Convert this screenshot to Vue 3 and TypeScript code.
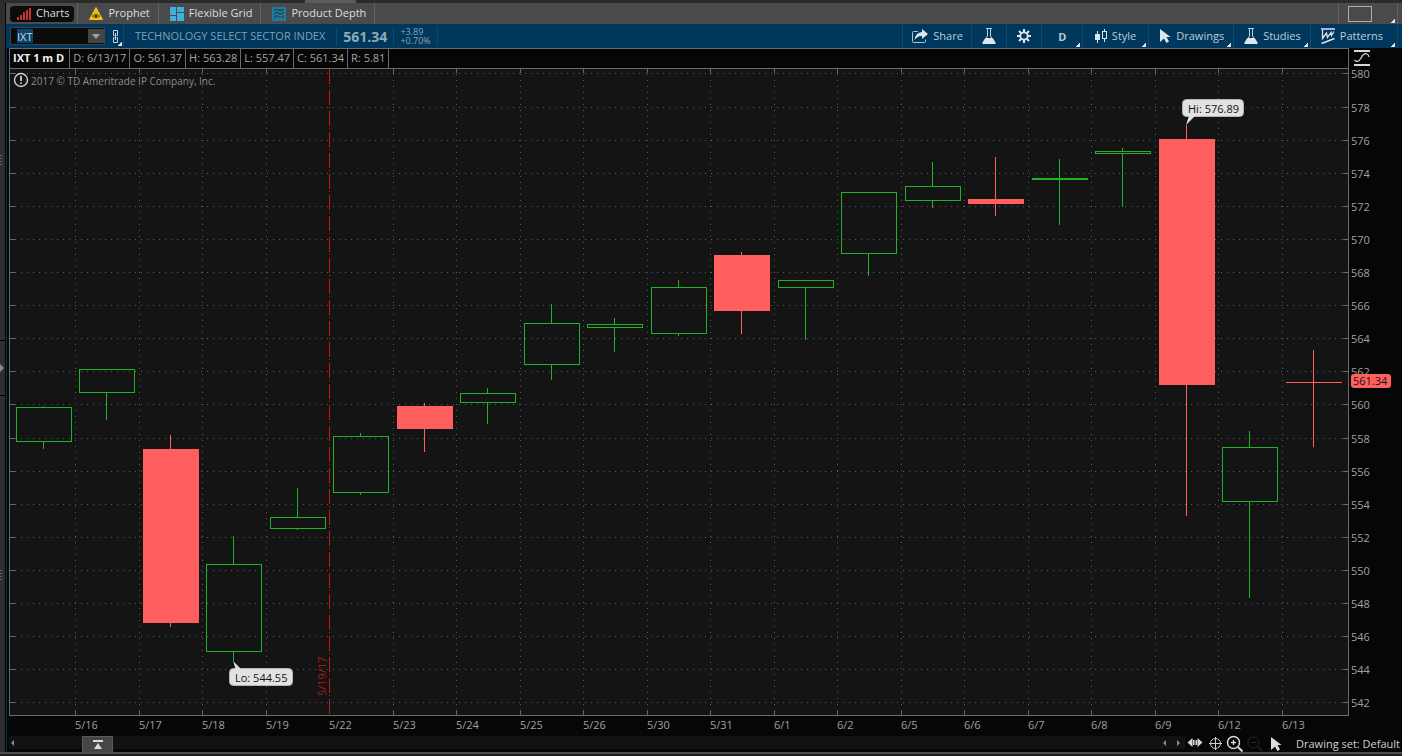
<script setup lang="ts">
import { computed, onBeforeUnmount, onMounted, ref } from 'vue'

interface Candle {
  date: string
  open: number
  high: number
  low: number
  close: number
}

const candles: Candle[] = [
  { date: '5/15', open: 557.79, high: 559.91, low: 557.37, close: 559.85 },
  { date: '5/16', open: 560.75, high: 562.14, low: 559.12, close: 562.14 },
  { date: '5/17', open: 557.31, high: 558.15, low: 546.61, close: 546.86 },
  { date: '5/18', open: 545.1, high: 552.05, low: 544.55, close: 550.36 },
  { date: '5/19', open: 552.53, high: 554.95, low: 552.47, close: 553.2 },
  { date: '5/22', open: 554.71, high: 558.27, low: 554.59, close: 558.09 },
  { date: '5/23', open: 559.91, high: 560.09, low: 557.19, close: 558.58 },
  { date: '5/24', open: 560.15, high: 560.99, low: 558.88, close: 560.69 },
  { date: '5/25', open: 562.44, high: 566.07, low: 561.54, close: 564.92 },
  { date: '5/26', open: 564.68, high: 565.22, low: 563.23, close: 564.86 },
  { date: '5/30', open: 564.32, high: 567.52, low: 564.2, close: 567.1 },
  { date: '5/31', open: 569.03, high: 569.21, low: 564.32, close: 565.71 },
  { date: '6/1', open: 567.1, high: 567.52, low: 563.95, close: 567.52 },
  { date: '6/2', open: 569.15, high: 572.84, low: 567.82, close: 572.84 },
  { date: '6/5', open: 572.35, high: 574.65, low: 571.93, close: 573.2 },
  { date: '6/6', open: 572.41, high: 574.95, low: 571.45, close: 572.17 },
  { date: '6/7', open: 573.62, high: 574.83, low: 570.9, close: 573.68 },
  { date: '6/8', open: 575.19, high: 575.5, low: 571.99, close: 575.31 },
  { date: '6/9', open: 576.04, high: 576.89, low: 553.32, close: 561.24 },
  { date: '6/12', open: 554.17, high: 558.4, low: 548.37, close: 557.43 },
  { date: '6/13', open: 561.37, high: 563.28, low: 557.47, close: 561.34 },
]

const tabs = [
  { id: 'charts', label: 'Charts' },
  { id: 'prophet', label: 'Prophet' },
  { id: 'grid', label: 'Flexible Grid' },
  { id: 'depth', label: 'Product Depth' },
]
const activeTab = ref('charts')
const symbol = ref('IXT')

const quote = ['D: 6/13/17', 'O: 561.37', 'H: 563.28', 'L: 557.47', 'C: 561.34', 'R: 5.81']

const AXIS_W = 53
const AXIS_H = 20
const TOP_PRICE = 580.299
const BOTTOM_PRICE = 541.205

const host = ref<HTMLElement | null>(null)
const width = ref(1393)
const height = ref(668)
let observer: ResizeObserver | null = null

function measure() {
  if (!host.value) return
  width.value = host.value.clientWidth
  height.value = host.value.clientHeight
}
onMounted(() => {
  measure()
  observer = new ResizeObserver(measure)
  observer.observe(host.value as HTMLElement)
})
onBeforeUnmount(() => observer?.disconnect())

const plotW = computed(() => width.value - AXIS_W)
const plotH = computed(() => height.value - AXIS_H)
const slot = computed(() => plotW.value / 21.102)

const y = (p: number) =>
  Math.floor(((TOP_PRICE - p) / (TOP_PRICE - BOTTOM_PRICE)) * (plotH.value - 1)) + 1
const gridX = (i: number) => Math.floor(3.25 + slot.value * i)

const levels = Array.from({ length: 20 }, (_, i) => 580 - i * 2)

const bars = computed(() =>
  candles.map((c, i) => {
    const up = c.close >= c.open
    const top = y(Math.max(c.open, c.close))
    const bottom = y(Math.min(c.open, c.close)) + 1
    return {
      key: c.date,
      up,
      x: Math.floor(34.25 + slot.value * i),
      w: Math.round(slot.value * 0.88),
      top,
      h: bottom - top,
      bottom,
      high: y(c.high),
      low: y(c.low) + 1,
    }
  }),
)
const dates = computed(() =>
  candles.slice(1).map((c, i) => ({ label: c.date, x: gridX(i + 1) })),
)
const hi = computed(() => bars.value[18])
const lo = computed(() => bars.value[3])
const last = computed(() => y(561.34))
const expiryX = computed(() => gridX(5))
</script>

<template>
  <div class="app">
    <div class="strip"></div>
    <div class="gutter">
      <i class="grip"></i>
      <button class="expander" aria-label="Expand sidebar">
        <svg width="4" height="8" viewBox="0 0 4 8"><path d="M0 0L4 4L0 8Z" fill="#8a8a8a" /></svg>
      </button>
      <i class="grip low"></i>
    </div>

    <main class="main">
      <nav class="tabs">
        <div v-for="t in tabs" :key="t.id" class="tab-cell">
          <button class="tab" :class="{ active: activeTab === t.id }" @click="activeTab = t.id">
            <svg v-if="t.id === 'charts'" width="14" height="12" viewBox="0 0 14 12">
              <path d="M0 9h2v3H0zM3 7h2v5H3zM6 4h2v8H6zM9 2h2v10H9zM12 0h2v12h-2z" fill="#c93030" />
            </svg>
            <svg v-else-if="t.id === 'prophet'" width="14" height="13" viewBox="0 0 14 13">
              <path d="M7 0.5L13.5 12.5H0.5Z" fill="#f2c00f" stroke="#f2c00f" stroke-linejoin="round" />
              <path d="M3.500 9Q7 5.600 10.500 9Q7 12.200 3.500 9Z" fill="none" stroke="#5a4a10" />
              <circle cx="7" cy="9" r="1.300" fill="#3a3010" />
            </svg>
            <svg v-else-if="t.id === 'grid'" width="14" height="14" viewBox="0 0 14 14">
              <path d="M0 0h6v8H0zM0 9h6v5H0zM7 0h7v5H7zM7 6h7v8H7z" fill="#3fb0de" />
            </svg>
            <svg v-else width="14" height="14" viewBox="0 0 14 14">
              <rect x="1" y="1" width="12" height="12" fill="#24505f" stroke="#1688b4" stroke-width="1.600" />
              <path d="M2 5Q4 2.500 6.500 4.500T12 4M2 8.500Q4 6 6.500 8T12 7M3 11h8" fill="none" stroke="#1f8fbc" />
            </svg>
            <span>{{ t.label }}</span>
          </button>
        </div>
        <div class="tab-right">
          <button class="layout-btn" aria-label="Grid layout"><span></span></button>
        </div>
      </nav>

      <header class="toolbar">
        <div class="symbol">
          <input v-model="symbol" aria-label="Symbol" spellcheck="false" />
          <button class="drop" aria-label="Symbol list">
            <svg width="8" height="5" viewBox="0 0 8 5"><path d="M0 0h8L4 5Z" fill="#a0a0a0" /></svg>
          </button>
        </div>
        <button class="link corner" aria-label="Link symbol">
          <svg width="7" height="13" viewBox="0 0 7 13" fill="none" stroke="#c4d4de">
            <path d="M2.500 5.500H1.500V0.500H5.500V5.500H4.500M2.500 7.500H1.500V12.500H5.500V7.500H4.500M3.500 3V10" />
          </svg>
        </button>
        <span class="name">TECHNOLOGY SELECT SECTOR INDEX</span>
        <strong class="last">561.34</strong>
        <span class="change"><span>+3.89</span><span>+0.70%</span></span>

        <div class="actions">
          <button class="act share">
            <svg width="16" height="14" viewBox="0 0 16 14">
              <path d="M6 2.500H1.500Q0.500 2.500 0.500 3.500V12.500Q0.500 13.500 1.500 13.500H12.500Q13.500 13.500 13.500 12.500V10.500" fill="none" stroke="#a9c4d2" />
              <path d="M10 0L16 5L10 10V7Q6 6.500 2.500 11Q3.500 3.500 10 3Z" fill="#dce6ec" />
            </svg>
            <span>Share</span>
          </button>
          <button class="act icon" aria-label="Analysis">
            <svg width="14" height="16" viewBox="0 0 14 16">
              <path d="M4 0.500H10M5.500 1V8L2 13M8.500 1V8L12 13" fill="none" stroke="#b6ccd8" />
              <path d="M3.500 10H10.500L13.500 14.500V16H0.500V14.500Z" fill="#dce6ec" />
            </svg>
          </button>
          <button class="act icon" aria-label="Settings">
            <svg width="14" height="14" viewBox="0 0 14 14" fill="none" stroke="#dce6ec">
              <circle cx="7" cy="7" r="3.700" stroke-width="1.800" />
              <path d="M7 0V3M7 11V14M0 7H3M11 7H14M2 2L4.200 4.200M9.800 9.800L12 12M2 12L4.200 9.800M9.800 4.200L12 2" stroke-width="2" />
            </svg>
          </button>
          <button class="act corner day"><b>D</b></button>
          <button class="act corner style">
            <svg width="14" height="14" viewBox="0 0 14 14">
              <path d="M4.500 2V14M11.500 0V13" stroke="#dce6ec" />
              <rect x="2" y="5" width="5" height="6" fill="#dce6ec" />
              <rect x="9.500" y="2.500" width="4" height="7" fill="#00375c" stroke="#dce6ec" />
            </svg>
            <span>Style</span>
          </button>
          <button class="act corner">
            <svg width="12" height="14" viewBox="0 0 12 14">
              <path d="M1 0L11.500 8H7.500L10 12.500L7.500 14L5 9.500L1 13Z" fill="#dce6ec" />
            </svg>
            <span>Drawings</span>
          </button>
          <button class="act corner">
            <svg width="14" height="16" viewBox="0 0 14 16">
              <path d="M4 0.500H10M5.500 1V8L2 13M8.500 1V8L12 13" fill="none" stroke="#b6ccd8" />
              <path d="M3.500 10H10.500L13.500 14.500V16H0.500V14.500Z" fill="#dce6ec" />
            </svg>
            <span>Studies</span>
          </button>
          <button class="act corner wide">
            <svg width="14" height="16" viewBox="0 0 14 16" fill="none" stroke="#dce6ec">
              <path d="M0 1H14M0.500 15.500L13.500 10.500" stroke-width="1.600" />
              <path d="M1.500 2V10.500L5.500 5L6.500 9.500L10 4.500L10.500 7.500L13 3.500" stroke-width="1.300" />
            </svg>
            <span>Patterns</span>
          </button>
        </div>
      </header>

      <section class="panel">
        <div class="quote">
          <b>IXT 1 m D</b>
          <span v-for="q in quote" :key="q">{{ q }}</span>
        </div>
        <button class="curve" aria-label="Scale settings">
          <svg width="16" height="16" viewBox="0 0 16 16" fill="none" stroke="#d8d8d8">
            <path d="M0 1H16M0 15H16" stroke-width="2" />
            <path d="M0.500 10Q4 13.500 7 8T13 4Q14.500 4.500 15 7" stroke-width="1.200" />
          </svg>
        </button>

        <div ref="host" class="chart">
          <svg :width="width" :height="height" :viewBox="`0 0 ${width} ${height}`" role="img" aria-label="IXT daily candlestick chart">
            <rect x="0" y="0" :width="plotW" :height="plotH" fill="#141414" />
            <g shape-rendering="crispEdges" fill="none">
              <g v-for="p in levels" :key="p">
                <path :d="`M6 ${y(p) + 0.5}H${plotW - 6}`" stroke="#5c5c5c" stroke-dasharray="1 5" />
                <path :d="`M0 ${y(p) + 0.5}h6M${plotW - 6} ${y(p) + 0.5}h6`" stroke="#6a6a6a" />
              </g>
              <g v-for="d in dates" :key="d.label">
                <path v-if="d.x !== expiryX" :d="`M${d.x + 0.5} 6V${plotH - 5}`" stroke="#5c5c5c" stroke-dasharray="1 5" />
                <path v-if="d.x !== expiryX" :d="`M${d.x + 0.5} 0v5M${d.x + 0.5} ${plotH - 5}v5`" stroke="#6a6a6a" />
              </g>
              <path :d="`M${expiryX + 0.5} 1V${plotH}`" stroke="#c41818" stroke-dasharray="15 2 1 3" />
              <path :d="`M0.5 0V${plotH - 0.5}H${plotW - 0.5}V0M0 0.5H${plotW}`" stroke="#6a6a6a" />
            </g>

            <g shape-rendering="crispEdges">
              <g v-for="b in bars" :key="b.key" :class="b.up ? 'up' : 'down'">
                <rect class="wick" :x="b.x" :y="b.high" width="1" :height="b.top - b.high" />
                <rect class="wick" :x="b.x" :y="b.bottom" width="1" :height="b.low - b.bottom" />
                <rect
                  v-if="b.up && b.h > 2"
                  class="hollow"
                  :x="b.x - 26.5"
                  :y="b.top + 0.5"
                  :width="b.w - 1"
                  :height="b.h - 1"
                />
                <rect v-else class="solid" :x="b.x - 27" :y="b.top" :width="b.w" :height="b.h" />
              </g>
            </g>

            <g class="axis">
              <text v-for="p in levels" :key="p" :x="plotW + 2" :y="y(p) + 5">{{ p }}</text>
              <text v-for="d in dates" :key="d.label" :x="d.x" :y="plotH + 13">{{ d.label }}</text>
            </g>

            <g :transform="`translate(${plotW + 2} ${last - 8})`">
              <rect width="40" height="14" rx="3" fill="#ff5f5f" />
              <text class="dark" x="2" y="11">561.34</text>
            </g>

            <text
              class="expiry"
              :transform="`translate(${expiryX - 3} ${plotH - 20}) rotate(-90)`"
            >5/19/17</text>

            <g :transform="`translate(${hi.x} ${hi.high})`">
              <rect x="-3.500" y="-25.500" width="61" height="17" rx="4" fill="#e2e2e2" stroke="#b4b4b4" />
              <path d="M0 0L3 -9H9Z" fill="#e2e2e2" />
              <text class="dark" x="2" y="-12">Hi: 576.89</text>
            </g>
            <g :transform="`translate(${lo.x} ${lo.low})`">
              <rect x="-3.500" y="7.500" width="63" height="17" rx="4" fill="#e2e2e2" stroke="#b4b4b4" />
              <path d="M0 0L3 9H9Z" fill="#e2e2e2" />
              <text class="dark" x="2" y="21">Lo: 544.55</text>
            </g>

            <g fill="none" stroke="#d0d0d0" stroke-width="1.400">
              <circle cx="12" cy="12" r="6.500" />
              <path d="M12 8V13M12 14.500V16" stroke-width="1.800" />
            </g>
            <text class="copy" x="22" y="17">2017 © TD Ameritrade IP Company, Inc.</text>
          </svg>
        </div>
      </section>

      <footer class="bottom">
        <div class="track">
          <button class="arrow" aria-label="Scroll left">
            <svg width="3" height="6" viewBox="0 0 3 6"><path d="M3 0V6L0 3Z" fill="#8a8a8a" /></svg>
          </button>
          <button class="pull" aria-label="Open panel">
            <svg width="10" height="9" viewBox="0 0 10 9"><path d="M0 0H10V2H0ZM5 3L9 9H1Z" fill="#dcdcdc" /></svg>
          </button>
          <button class="arrow prev" aria-label="Scroll back">
            <svg width="3" height="6" viewBox="0 0 3 6"><path d="M3 0V6L0 3Z" fill="#8a8a8a" /></svg>
          </button>
          <button class="arrow" aria-label="Scroll right">
            <svg width="3" height="6" viewBox="0 0 3 6"><path d="M0 0V6L3 3Z" fill="#8a8a8a" /></svg>
          </button>
        </div>
        <button class="tool" aria-label="Pan">
          <svg width="16" height="16" viewBox="0 0 16 16">
            <path d="M5.500 2V11L0.500 6.500ZM10.500 2V11L15.500 6.500ZM6 4h1v5H6zM7.500 4h1v5h-1zM9 4h1v5H9z" fill="#d8d8d8" />
          </svg>
        </button>
        <button class="tool" aria-label="Crosshair">
          <svg width="16" height="16" viewBox="0 0 16 16" fill="none" stroke="#d0d0d0">
            <circle cx="8.500" cy="7.500" r="5" /><path d="M2 7.500H15M8.500 1V14" />
          </svg>
        </button>
        <button class="tool" aria-label="Zoom in">
          <svg width="18" height="18" viewBox="0 0 18 18" fill="none" stroke="#d8d8d8">
            <circle cx="7.500" cy="7.500" r="6" stroke-width="1.500" />
            <path d="M12 12L16.500 16.500" stroke-width="2" /><path d="M5 7.500H10M7.500 5V10" stroke-width="1.300" />
          </svg>
        </button>
        <button class="tool" aria-label="Zoom out" disabled>
          <svg width="18" height="18" viewBox="0 0 18 18" fill="none" stroke="#262626">
            <circle cx="7.500" cy="7.500" r="5.500" /><path d="M12 12L16 16" stroke-width="1.500" /><path d="M5 7.500H10" />
          </svg>
        </button>
        <button class="tool cursor" aria-label="Pointer">
          <svg width="12" height="14" viewBox="0 0 12 14">
            <path d="M1 0L11.500 8H7.500L10 12.500L7.500 14L5 9.500L1 13Z" fill="#dcdcdc" />
          </svg>
        </button>
        <button class="set">Drawing set: Default</button>
      </footer>
    </main>
    <div class="base"></div>
  </div>
</template>

<style>
html,
body {
  margin: 0;
  background: #0a0a0a;
}
</style>

<style scoped>
.app {
  display: grid;
  grid-template-columns: 8px minmax(0, 1fr);
  grid-template-rows: 3px minmax(0, 1fr) 4px;
  height: 100vh;
  min-height: 400px;
  overflow: hidden;
  background: #060606;
  color: #c8c8c8;
  font-family: 'Open Sans', 'Noto Sans', sans-serif;
  font-size: 11px;
}
button,
input {
  margin: 0;
  padding: 0;
  border: 0;
  background: none;
  color: inherit;
  font: inherit;
}
svg {
  display: block;
  flex: none;
}
.strip {
  grid-column: 1 / -1;
  background: linear-gradient(90deg, #2b2b2b 305px, #5c5c5c 305px, #5c5c5c 356px, #2b2b2b 356px);
}
.gutter {
  display: flex;
  flex-direction: column;
  align-items: flex-start;
  justify-content: space-between;
  box-sizing: border-box;
  width: 8px;
  background: linear-gradient(90deg, #2e2e2e 5px, #050505 5px, #050505 6px, #0b3048 6px, #0b3048 7px, #050505 7px);
}
.grip {
  width: 2px;
  height: 10px;
  margin-top: 152px;
  background: repeating-linear-gradient(#666 0 1px, transparent 1px 3px);
}
.grip.low {
  margin: 0 0 172px;
}
.expander {
  display: flex;
  align-items: center;
  width: 5px;
  height: 56px;
  border-top: 1px solid #000;
  border-bottom: 1px solid #000;
}
.main {
  display: flex;
  flex-direction: column;
  min-width: 0;
  min-height: 0;
}
.tabs {
  display: flex;
  height: 21px;
  margin-left: -2px;
  background: #4a4a4a;
  color: #dedede;
}
.tab-cell {
  display: flex;
  align-items: center;
  padding: 0 3px 0 4px;
  border-right: 1px solid #626262;
}
.tab {
  display: flex;
  align-items: center;
  gap: 5px;
  height: 16px;
  padding: 0 5px 0 7px;
  border-radius: 4px;
}
.tab span,
.act span,
.name {
  padding-bottom: 2px;
}
.tab.active {
  background: #0c0c0c;
}
.tab-right {
  display: flex;
  align-items: center;
  margin-left: auto;
  margin-right: 4px;
  padding: 0 25px 0 9px;
  border-left: 1px solid #626262;
  border-right: 1px solid #626262;
  position: relative;
}
.layout-btn span {
  display: block;
  width: 22px;
  height: 14px;
  border: 1px solid #acacac;
}
.tab-right::after,
.corner::after {
  content: '';
  position: absolute;
  right: 2px;
  bottom: 1px;
  width: 4px;
  height: 4px;
  background: linear-gradient(135deg, transparent 50%, #dce6ec 50%);
}
.toolbar {
  display: flex;
  align-items: center;
  height: 24px;
  margin-left: -2px;
  padding: 0 4px;
  background: #00375c;
  color: #b9ccd6;
}
.symbol {
  display: flex;
  align-items: center;
  box-sizing: border-box;
  width: 95px;
  height: 18px;
  border: 1px solid #3c444a;
  background: #0c0c0c;
}
.symbol input {
  width: 16px;
  height: 14px;
  margin-left: 6px;
  background: #0a466e;
  color: #c6d6e0;
}
.drop {
  display: flex;
  align-items: center;
  justify-content: center;
  width: 16px;
  height: 14px;
  margin-left: auto;
  background: #454545;
}
.link {
  position: relative;
  display: flex;
  align-items: center;
  justify-content: center;
  width: 19px;
  height: 20px;
  padding-left: 2px;
  border-right: 1px solid #0f4a6b;
}
.link.corner::after {
  right: 1px;
  bottom: 0;
}
.name {
  margin-left: 11px;
  padding-right: 11px;
  color: #7da0b3;
  white-space: nowrap;
}
.last {
  padding: 0 6px;
  border-left: 1px solid #0f4a6b;
  border-right: 1px solid #0f4a6b;
  color: #8fabb5;
  font-size: 14px;
}
.change {
  display: flex;
  flex-direction: column;
  padding: 0 6px;
  border-right: 1px solid #0f4a6b;
  color: #8aa6ae;
  font-size: 9px;
  line-height: 9px;
}
.actions {
  display: flex;
  margin-left: auto;
  border-right: 1px solid #0f4a6b;
}
.act {
  position: relative;
  display: flex;
  align-items: center;
  justify-content: center;
  gap: 5px;
  height: 24px;
  padding: 0 9px 0 10px;
  border-left: 1px solid #0f4a6b;
}
.act.share {
  padding: 0 8px 0 9px;
}
.act.icon {
  width: 35px;
}
.act.style {
  padding-right: 12px;
}
.act.wide {
  padding-right: 14px;
}
.act.day {
  width: 41px;
}
.panel {
  display: grid;
  grid-template-columns: minmax(0, 1fr) 53px;
  grid-template-rows: 20px minmax(0, 1fr);
  flex: 1;
  min-height: 0;
  margin-left: 1px;
}
.quote {
  display: flex;
  align-items: stretch;
  box-sizing: border-box;
  border: 1px solid #6a6a6a;
  border-bottom: 0;
  background: #060606;
  color: #a4a4a4;
  line-height: 18px;
  white-space: nowrap;
}
.quote b {
  padding: 0 5px 0 3px;
  border-right: 1px solid #6a6a6a;
  color: #f2f2f2;
}
.quote span {
  padding: 0 3px;
  border-right: 1px solid #6a6a6a;
}
.curve {
  justify-self: start;
  margin-left: 5px;
}
.chart {
  grid-column: 1 / -1;
  min-width: 0;
  min-height: 0;
}
.chart svg {
  overflow: visible;
}
.up .wick,
.up .solid {
  fill: #1fb226;
}
.up .hollow {
  fill: none;
  stroke: #1fb226;
}
.down .wick,
.down .solid {
  fill: #ff5f5f;
}
.axis text {
  fill: #a0a0a0;
}
.dark {
  fill: #141414;
}
.expiry {
  fill: #a81c1c;
}
.copy {
  fill: #8c8c8c;
  font-size: 10px;
}
.bottom {
  display: flex;
  align-items: center;
  height: 16px;
  margin-left: 1px;
}
.track {
  display: flex;
  align-items: center;
  flex: 1;
  height: 13px;
  align-self: flex-start;
  background: #121212;
}
.arrow {
  padding: 3px 2px;
}
.arrow.prev {
  margin: 0 7px 0 auto;
}
.arrow:last-child {
  margin-right: 3px;
}
.pull {
  display: flex;
  align-items: center;
  justify-content: center;
  box-sizing: border-box;
  width: 31px;
  height: 17px;
  margin: 4px 0 0 66px;
  border: 1px solid #5a5a5a;
  background: #464646;
}
.tool {
  display: flex;
  align-items: center;
  justify-content: center;
  width: 20px;
  height: 16px;
}
.cursor {
  width: 22px;
}
.set {
  margin: 0 2px 2px 9px;
  color: #d0d0d0;
  white-space: nowrap;
}
.base {
  grid-column: 1 / -1;
  background: linear-gradient(#4e4e4e 2px, #202020 2px);
}
</style>
